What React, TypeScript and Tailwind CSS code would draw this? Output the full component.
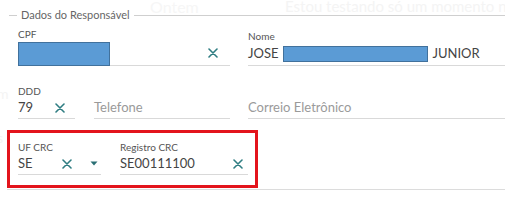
import * as React from 'react';

const FONT = { fontFamily: 'Lato, "Open Sans", sans-serif' };

function ClearX({ className = '' }: { className?: string }) {
  return (
    <svg viewBox="0 0 10 10" className={`h-[10px] w-[10px] ${className}`} fill="none">
      <path d="M1 1 L9 9 M9 1 L1 9" stroke="#2f7d82" strokeWidth="1.6" strokeLinecap="round" />
    </svg>
  );
}

function Caret() {
  return (
    <svg viewBox="0 0 8 5" className="h-[5px] w-[8px]">
      <path d="M0.5 0.5 L7.5 0.5 L4 4.5 Z" fill="#2a6f74" />
    </svg>
  );
}

export default function App() {
  return (
    <div className="relative h-[200px] w-[505px] overflow-hidden bg-white text-[#444]" style={FONT}>
      {/* faded text from behind the panel */}
      <div className="absolute left-[150px] top-[-5px] text-[16px] text-[#f6f6f6]">Ontem</div>
      <div className="absolute left-[285px] top-[-5px] whitespace-nowrap text-[15px] text-[#f4f4f4]">
        Estou testando só um momento na
      </div>
      <div className="absolute left-[-3px] top-[83px] text-[14px] text-[#f4f4f4]">m</div>
      <div className="absolute left-[-3px] top-[127px] text-[14px] text-[#f4f4f4]">s</div>

      <div className="relative flex flex-col">
        {/* legend */}
        <div className="mt-[8px] flex items-center">
          <div className="ml-[9px] h-px w-[8px] bg-[#cfcfcf]" />
          <span className="px-[4px] text-[11px] leading-[14px] text-[#666]">Dados do Responsável</span>
          <div className="h-px flex-1 bg-[#cfcfcf]" />
        </div>

        {/* row 1 */}
        <div className="mt-[6px] flex">
          <div className="ml-[18px] w-[212px]">
            <div className="text-[10px] leading-[12px] text-[#555]">CPF</div>
            <div className="flex h-[26px] items-center justify-between border-b border-[#d9d9d9]">
              <div className="mt-[2px] h-[24px] w-[92px] self-start border border-[#41719c] bg-[#5b9bd5]" />
              <ClearX className="mr-[12px]" />
            </div>
          </div>
          <div className="ml-[18px] flex-1">
            <div className="mt-[2px] text-[10px] leading-[12px] text-[#555]">Nome</div>
            <div className="flex h-[24px] items-center border-b border-[#d9d9d9] text-[13px]">
              <span>JOSE</span>
              <div className="ml-[5px] h-[16px] w-[145px] border border-[#41719c] bg-[#5b9bd5]" />
              <span className="ml-[4px]">JUNIOR</span>
            </div>
          </div>
        </div>

        {/* row 2 */}
        <div className="mt-[19px] flex items-end">
          <div className="ml-[18px] w-[57px]">
            <div className="text-[10px] leading-[12px] text-[#555]">DDD</div>
            <div className="flex h-[22px] items-center justify-between border-b border-[#d9d9d9] text-[13px]">
              <span>79</span>
              <ClearX className="mr-[10px]" />
            </div>
          </div>
          <div className="ml-[19px] flex h-[22px] w-[136px] items-center border-b border-[#d9d9d9] text-[13px] text-[#9a9a9a]">
            Telefone
          </div>
          <div className="ml-[18px] flex h-[22px] flex-1 items-center border-b border-[#d9d9d9] text-[13px] text-[#9a9a9a]">
            Correio Eletrônico
          </div>
        </div>

        {/* highlighted row */}
        <div className="relative">
          <div className="ml-[7px] mt-[11px] flex h-[58px] w-[251px] border-[3px] border-[#e3141c] pt-[8px]">
            <div className="ml-[8px] w-[83px]">
              <div className="text-[10px] leading-[12px] text-[#555]">UF CRC</div>
              <div className="flex h-[22px] items-center border-b border-[#d9d9d9] text-[13px]">
                <span className="w-[44px]">SE</span>
                <ClearX />
                <span className="ml-[18px]">
                  <Caret />
                </span>
              </div>
            </div>
            <div className="ml-[19px] w-[128px]">
              <div className="text-[10px] leading-[12px] text-[#555]">Registro CRC</div>
              <div className="flex h-[22px] items-center justify-between border-b border-[#d9d9d9] text-[13px]">
                <span>SE00111100</span>
                <ClearX className="mr-[5px]" />
              </div>
            </div>
          </div>
          <div className="ml-[7px] mt-px h-px bg-[#dcdcdc]" />
        </div>
      </div>
    </div>
  );
}
